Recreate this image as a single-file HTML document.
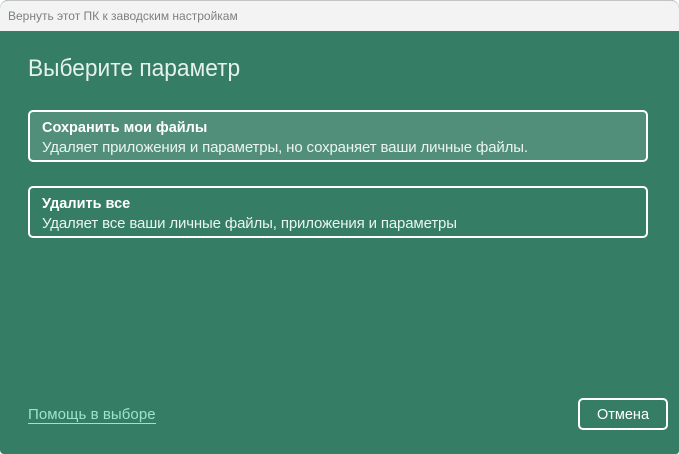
<!DOCTYPE html>
<html lang="ru">
<head>
<meta charset="utf-8">
<style>
html,body{margin:0;padding:0;width:679px;height:454px;overflow:hidden;background:#ffffff;}
body{position:relative;font-family:"Liberation Sans","DejaVu Sans",sans-serif;}
.abs{position:absolute;white-space:nowrap;}
#win{position:absolute;left:0;top:0;width:679px;height:454px;overflow:hidden;border-radius:8px 8px 3px 4px;background:#357d64;}
#bar{position:absolute;left:0;top:0;width:679px;height:31px;background:#f3f3f3;border-top:1px solid #c4c4c4;box-sizing:border-box;border-radius:8px 8px 0 0;}
.card{position:absolute;left:28px;width:620px;height:52px;box-sizing:border-box;border:2px solid #fff;border-radius:5px;}
.t{color:#fff;font-size:14.5px;font-weight:bold;}
.d{color:#eaf4f0;font-size:15px;letter-spacing:-0.14px;}
</style>
</head>
<body>
<div id="win">
<div id="bar"></div>
<div class="abs" style="left:8px;top:9px;font-size:12px;line-height:14px;color:#7f7f7f;">Вернуть этот ПК к заводским настройкам</div>
<div class="abs" style="left:28px;top:54px;font-size:24px;line-height:30px;color:#e4f1ec;transform:scaleX(0.947);transform-origin:left center;">Выберите параметр</div>

<div class="card" style="top:110px;background:#528f7a;"></div>
<div class="abs t" style="left:42px;top:120px;line-height:16px;">Сохранить мои файлы</div>
<div class="abs d" style="left:42px;top:140px;line-height:16px;">Удаляет приложения и параметры, но сохраняет ваши личные файлы.</div>

<div class="card" style="top:186px;"></div>
<div class="abs t" style="left:42px;top:196px;line-height:16px;">Удалить все</div>
<div class="abs d" style="left:42px;top:216px;line-height:16px;">Удаляет все ваши личные файлы, приложения и параметры</div>

<div class="abs" style="left:28px;top:406px;font-size:15px;line-height:17px;letter-spacing:0.07px;color:#9fe3c8;border-bottom:1px solid #9fe3c8;">Помощь в выборе</div>

<div class="abs" style="left:578px;top:398px;width:90px;height:32px;box-sizing:border-box;border:2px solid #fff;border-radius:5px;"></div>
<div class="abs" style="left:578px;top:407px;width:90px;text-align:center;font-size:14.5px;line-height:17px;color:#fff;">Отмена</div>
</div>
</body>
</html>
